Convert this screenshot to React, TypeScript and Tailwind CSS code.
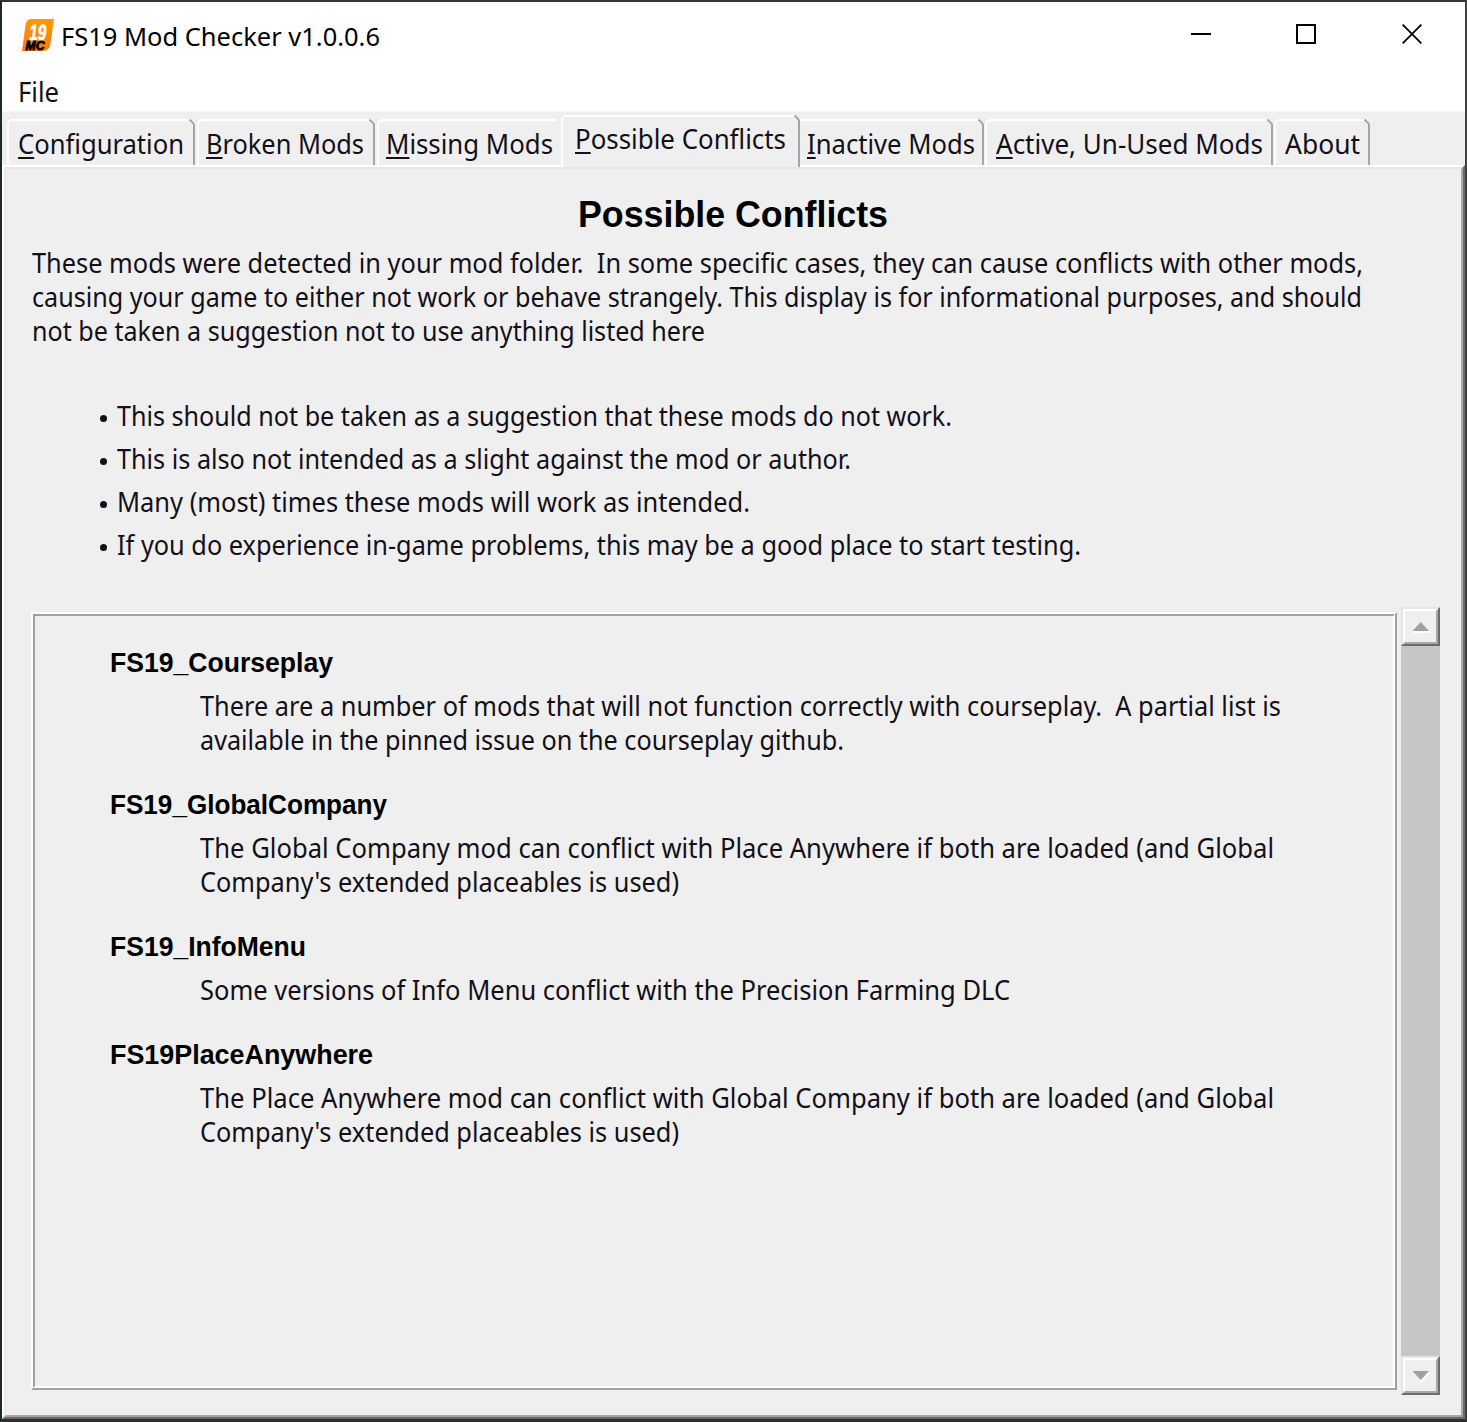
import { useLayoutEffect, useRef } from 'react';
import type { ReactNode } from 'react';

/* A single line of text whose glyphs are condensed to a given advance width. */
function Fit({ width, className = '', children }: { width: number; className?: string; children: ReactNode }) {
  const ref = useRef<HTMLSpanElement>(null);
  useLayoutEffect(() => {
    const el = ref.current;
    if (!el) return;
    el.style.transform = 'none';
    const natural = el.getBoundingClientRect().width;
    if (natural > 0) el.style.transform = `scaleX(${width / natural})`;
  }, [width]);
  return (
    <span className="block" style={{ width }}>
      <span ref={ref} className={`inline-block origin-left whitespace-pre align-top ${className}`}>
        {children}
      </span>
    </span>
  );
}

const UI = "text-[27px] leading-[34px] font-['Noto_Sans',sans-serif] text-[#141019]";
const HEAD = "text-[27px] leading-[34px] font-bold font-['Liberation_Sans',Arial,sans-serif] text-black";

type TabInfo = { key: string; rest: string; tw: number; box: string; pad: string; active?: boolean; noRight?: boolean; noLeft?: boolean; plain?: boolean };

const tabs: TabInfo[] = [
  { key: 'C', rest: 'onfiguration', tw: 166, box: 'w-[188px]', pad: 'pl-[11px]' },
  { key: 'B', rest: 'roken Mods', tw: 158, box: 'ml-[2px] w-[178px]', pad: 'pl-[9px]' },
  { key: 'M', rest: 'issing Mods', tw: 167, box: 'ml-[2px] w-[184px]', pad: 'pl-[9px]', noRight: true },
  { key: 'P', rest: 'ossible Conflicts', tw: 211, box: 'w-[239px]', pad: 'pl-[14px]', active: true },
  { key: 'I', rest: 'nactive Mods', tw: 168, box: 'w-[184px]', pad: 'pl-[7px]', noLeft: true },
  { key: 'A', rest: 'ctive, Un-Used Mods', tw: 267, box: 'ml-[1px] w-[288px]', pad: 'pl-[11px]' },
  { key: 'A', rest: 'bout', tw: 75, box: 'ml-[1px] w-[96px]', pad: 'pl-[11px]', plain: true },
];

function Tab({ t }: { t: TabInfo }) {
  return (
    <div
      className={`relative shrink-0 border-white ${t.noLeft ? '' : 'rounded-tl-[6px] border-l-2'} ${t.box} ${
        t.active ? 'z-10 h-[52px] bg-[#efefef]' : 'h-[46px]'
      }`}
    >
      <div className={`mr-[5px] h-full border-t-2 border-white ${t.noLeft ? '' : '-ml-[2px] rounded-tl-[6px]'}`}>
        <div className={`${t.pad} ${t.active ? 'pt-[5px]' : 'pt-[6px]'}`}>
          <Fit width={t.tw} className={UI}>
            {t.plain ? (
              t.key
            ) : (
              <span className="underline decoration-[2px] underline-offset-[3px] [text-decoration-skip-ink:none]">{t.key}</span>
            )}
            {t.rest}
          </Fit>
        </div>
      </div>
      {!t.noRight && (
        <>
          <svg className="absolute top-0 right-0" width="6" height="6" viewBox="0 0 6 6">
            <path d="M0.5 0.5L5 5" stroke="#a2a2a2" strokeWidth="1.8" fill="none" />
          </svg>
          <span className="absolute top-[5px] right-0 bottom-0 w-[2px] bg-[#a5a5a5]" />
        </>
      )}
    </div>
  );
}

const intro: [string, number][] = [
  ['These mods were detected in your mod folder.  In some specific cases, they can cause conflicts with other mods,', 1331],
  ['causing your game to either not work or behave strangely. This display is for informational purposes, and should', 1330],
  ['not be taken a suggestion not to use anything listed here', 673],
];

const bullets: [string, number][] = [
  ['This should not be taken as a suggestion that these mods do not work.', 835],
  ['This is also not intended as a slight against the mod or author.', 734],
  ['Many (most) times these mods will work as intended.', 633],
  ['If you do experience in-game problems, this may be a good place to start testing.', 964],
];

const mods: { name: string; w: number; lines: [string, number][] }[] = [
  {
    name: 'FS19_Courseplay',
    w: 223,
    lines: [
      ['There are a number of mods that will not function correctly with courseplay.  A partial list is', 1081],
      ['available in the pinned issue on the courseplay github.', 644],
    ],
  },
  {
    name: 'FS19_GlobalCompany',
    w: 277,
    lines: [
      ['The Global Company mod can conflict with Place Anywhere if both are loaded (and Global', 1074],
      ["Company's extended placeables is used)", 479],
    ],
  },
  {
    name: 'FS19_InfoMenu',
    w: 196,
    lines: [['Some versions of Info Menu conflict with the Precision Farming DLC', 810]],
  },
  {
    name: 'FS19PlaceAnywhere',
    w: 263,
    lines: [
      ['The Place Anywhere mod can conflict with Global Company if both are loaded (and Global', 1074],
      ["Company's extended placeables is used)", 479],
    ],
  },
];

function ScrollButton({ down = false }: { down?: boolean }) {
  return (
    <div className="h-[39px] w-[39px] shrink-0 border-2 border-t-[#e6e6e6] border-r-[#6c6c6c] border-b-[#6c6c6c] border-l-[#e3e3e3]">
      <div className="flex h-full w-full items-center justify-center border-2 border-t-white border-r-[#a8a8a8] border-b-[#a8a8a8] border-l-white bg-[#efefef]">
        <svg width="18" height="12" viewBox="0 0 18 12">
          {down ? (
            <>
              <path d="M9 11.5L17.5 2.5" stroke="#fff" strokeWidth="2" />
              <path d="M0.5 1H17L8.8 10Z" fill="#a0a0a0" />
            </>
          ) : (
            <>
              <path d="M1 11H18" stroke="#fff" strokeWidth="2" />
              <path d="M0.5 10H17L8.8 1Z" fill="#a0a0a0" />
            </>
          )}
        </svg>
      </div>
    </div>
  );
}

export default function App() {
  return (
    <div className="flex h-[1422px] w-[1467px] flex-col overflow-hidden border-t-2 border-r-2 border-b-[3px] border-l-2 border-t-[#343336] border-r-[#414041] border-b-[#2e2e30] border-l-[#20272a] bg-[#efefef]">
      {/* Title bar */}
      <div className="flex h-[70px] shrink-0 items-start bg-white pl-[20px]">
        <svg className="mt-[17px] shrink-0 overflow-visible" width="32" height="32" viewBox="0 0 32 32">
          <defs>
            <linearGradient id="badge" x1="0" y1="0" x2="0" y2="1">
              <stop offset="0" stopColor="#fd9a05" />
              <stop offset="1" stopColor="#f47a16" />
            </linearGradient>
          </defs>
          <path d="M9 0H32L28.5 25Q27.5 32 21 32H0L3.5 6Q4.5 0 9 0Z" fill="url(#badge)" />
          <text x="7" y="21" fontSize="22" fontWeight="700" fill="#fff" stroke="#fff" strokeWidth="0.6" fontFamily="Liberation Sans" textLength="17" lengthAdjust="spacingAndGlyphs" transform="skewX(-6) translate(2 0)">
            19
          </text>
          <text x="3.5" y="30.5" fontSize="12" fontWeight="700" fontStyle="italic" fill="#000" stroke="#000" strokeWidth="0.8" fontFamily="Liberation Sans" textLength="19" lengthAdjust="spacingAndGlyphs">
            MC
          </text>
        </svg>
        <div className="mt-[17px] ml-[7px]">
          <Fit width={319} className="font-['Noto_Sans',sans-serif] text-[26px] leading-[34px] text-black">
            FS19 Mod Checker v1.0.0.6
          </Fit>
        </div>
        <div className="mt-[22px] mr-[43px] ml-auto flex gap-[85px]">
          <svg width="20" height="20" viewBox="0 0 20 20">
            <path d="M0 10H20" stroke="#000" strokeWidth="2" />
          </svg>
          <svg width="20" height="20" viewBox="0 0 20 20">
            <rect x="1" y="1" width="18" height="18" fill="none" stroke="#000" strokeWidth="2" />
          </svg>
          <svg className="ml-[1px]" width="20" height="20" viewBox="0 0 20 20">
            <path d="M0.6 0.6L19.4 19.4M19.4 0.6L0.6 19.4" stroke="#000" strokeWidth="1.8" />
          </svg>
        </div>
      </div>

      {/* Menu bar */}
      <div className="h-[39px] shrink-0 bg-white pt-[3px] pl-[16px]">
        <Fit width={41} className={UI}>
          File
        </Fit>
      </div>

      {/* Tabs */}
      <div className="flex h-[54px] shrink-0 items-end border-t border-[#f6f6f6] pl-[5px]">
        {tabs.map((t, i) => (
          <div key={i} className={t.active ? 'relative z-10 -mb-[2px]' : ''}>
            <Tab t={t} />
          </div>
        ))}
      </div>

      {/* Tab panel */}
      <div className="flex min-h-0 grow flex-col border-2 border-t-white border-r-[#6a6a6a] border-b-[#6a6a6a] border-l-white">
        <div className="flex min-h-0 grow flex-col border-2 border-t-[#e6e6e6] border-r-[#a6a6a6] border-b-[#a6a6a6] border-l-[#e9e9e9]">
          <div className="mt-[25px] ml-[572px] h-[42px]">
            <Fit width={310} className="font-['Liberation_Sans',Arial,sans-serif] text-[37px] leading-[42px] font-bold text-black">
              Possible Conflicts
            </Fit>
          </div>
          <div className="mt-[10px] ml-[26px]">
            {intro.map(([s, w]) => (
              <div key={s} className="h-[34px]">
                <Fit width={w} className={UI}>
                  {s}
                </Fit>
              </div>
            ))}
          </div>
          <ul className="mt-[51px] ml-[94px] flex flex-col gap-[9px]">
            {bullets.map(([s, w]) => (
              <li key={s} className="flex h-[34px] items-center">
                <span className="mt-[4px] mr-[10px] size-[7px] rounded-full bg-[#141019]" />
                <Fit width={w} className={UI}>
                  {s}
                </Fit>
              </li>
            ))}
          </ul>
          <div className="mt-[45px] ml-[25px] flex h-[788px]">
            {/* Results list */}
            <div className="mt-[5px] h-[778px] w-[1366px] border-2 border-t-white border-r-[#a0a0a0] border-b-[#a0a0a0] border-l-white">
              <div className="h-full border-2 border-t-[#a0a0a0] border-r-white border-b-white border-l-[#a0a0a0] pt-[30px]">
                {mods.map((m) => (
                  <section key={m.name} className="mb-[31px]">
                    <div className="mb-[9px] ml-[75px] h-[34px]">
                      <Fit width={m.w} className={HEAD}>
                        {m.name}
                      </Fit>
                    </div>
                    <div className="ml-[165px]">
                      {m.lines.map(([s, w]) => (
                        <div key={s} className="h-[34px]">
                          <Fit width={w} className={UI}>
                            {s}
                          </Fit>
                        </div>
                      ))}
                    </div>
                  </section>
                ))}
              </div>
            </div>
            {/* Scrollbar */}
            <div className="ml-[4px] flex w-[39px] flex-col justify-between bg-[#c6c6c6]">
              <ScrollButton />
              <ScrollButton down />
            </div>
          </div>
        </div>
      </div>
    </div>
  );
}
